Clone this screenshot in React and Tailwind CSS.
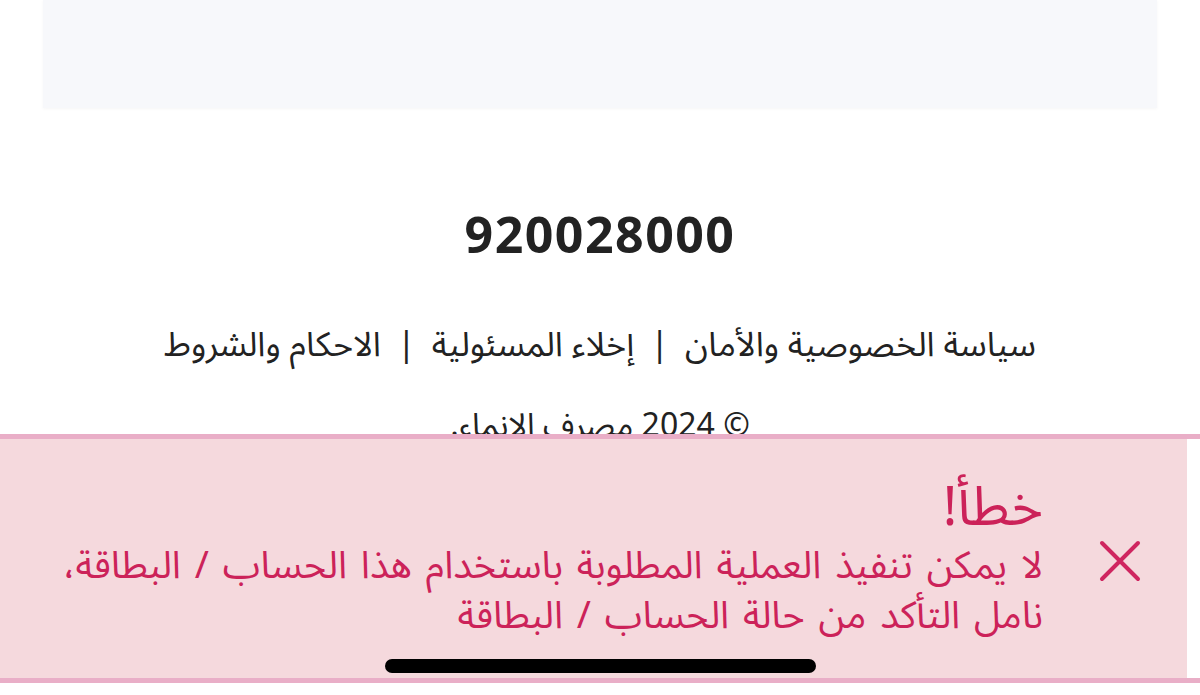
import React from "react";

const arabicFont = { fontFamily: '"Noto Sans Arabic", "DejaVu Sans", sans-serif' };

const App = () => {
  return (
    <div className="relative w-full h-[695px] overflow-hidden bg-white">
      {/* Card at top */}
      <div className="mx-[43px] h-[108px] bg-[#f7f8fb] shadow-[0_1px_3px_rgba(0,0,0,0.04)]" />

      {/* Footer */}
      <div className="flex flex-col items-center">
        <div
          className="mt-[96px] text-[50px] leading-[60px] font-bold text-[#222222] tracking-[1.5px]"
          style={{ fontFamily: '"Open Sans", "Liberation Sans", sans-serif' }}
        >
          920028000
        </div>

        <div
          dir="rtl"
          className="mt-[58px] flex items-center gap-4 text-[34px] leading-[46px] text-[#222222]"
          style={arabicFont}
        >
          <span>سياسة الخصوصية والأمان</span>
          <span>|</span>
          <span>إخلاء المسئولية</span>
          <span>|</span>
          <span>الاحكام والشروط</span>
        </div>

        <div dir="rtl" className="mt-[36px] text-[32px] leading-[44px] text-[#222222]" style={arabicFont}>
          © 2024 مصرف الإنماء.
        </div>
      </div>

      {/* Error alert */}
      <div className="absolute left-0 right-0 bottom-[12px] h-[249px] border-y-[5px] border-[#e9aec7] bg-white">
        <div dir="rtl" className="h-full mr-[13px] bg-[#f5d9dd] flex items-start pr-[45px] pt-[100px]">
          <svg width="44" height="44" viewBox="0 0 44 44" className="shrink-0">
            <path d="M4 4 40 40M40 4 4 40" stroke="#cf2660" strokeWidth="4" strokeLinecap="round" />
          </svg>
          <div className="mr-[55px] -mt-[62px] text-[#cc2259]" style={arabicFont}>
            <div className="text-[54px] leading-[62px]">خطأ!</div>
            <div className="mt-[2px] text-[38px] leading-[50px] [word-spacing:4px]">
              لا يمكن تنفيذ العملية المطلوبة باستخدام هذا الحساب / البطاقة،
              <br />
              نامل التأكد من حالة الحساب / البطاقة
            </div>
          </div>
        </div>
      </div>

      {/* iOS home indicator */}
      <div className="absolute left-[385px] top-[659px] w-[431px] h-[14px] rounded-full bg-black" />
    </div>
  );
};

export default App;
